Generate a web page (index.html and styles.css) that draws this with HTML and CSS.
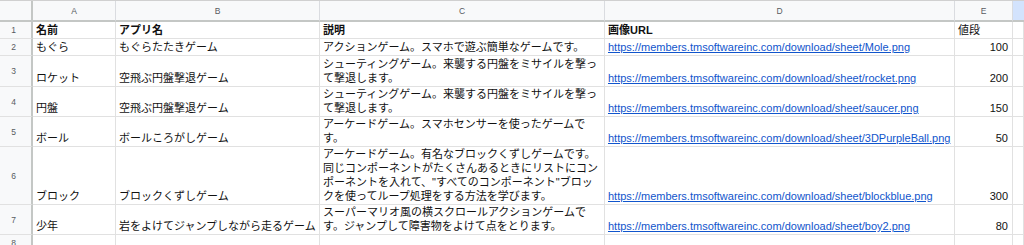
FILE: index.html
```html
<!DOCTYPE html>
<html lang="ja">
<head>
<meta charset="utf-8">
<link rel="stylesheet" href="styles.css">
</head>
<body>
<div class="sheet">
  <div class="corner"></div>
  <div class="colhead">A</div>
  <div class="colhead">B</div>
  <div class="colhead">C</div>
  <div class="colhead">D</div>
  <div class="colhead">E</div>
  <div class="colhead sel"></div>

  <div class="rowhead">1</div>
  <div class="cell b">名前</div>
  <div class="cell b">アプリ名</div>
  <div class="cell b">説明</div>
  <div class="cell b">画像URL</div>
  <div class="cell">値段</div>
  <div class="cell"></div>

  <div class="rowhead">2</div>
  <div class="cell">もぐら</div>
  <div class="cell">もぐらたたきゲーム</div>
  <div class="cell">アクションゲーム。スマホで遊ぶ簡単なゲームです。</div>
  <div class="cell"><a class="link">https://members.tmsoftwareinc.com/download/sheet/Mole.png</a></div>
  <div class="cell num">100</div>
  <div class="cell"></div>

  <div class="rowhead">3</div>
  <div class="cell">ロケット</div>
  <div class="cell">空飛ぶ円盤撃退ゲーム</div>
  <div class="cell">シューティングゲーム。来襲する円盤をミサイルを撃っ<br>て撃退します。</div>
  <div class="cell"><a class="link">https://members.tmsoftwareinc.com/download/sheet/rocket.png</a></div>
  <div class="cell num">200</div>
  <div class="cell"></div>

  <div class="rowhead">4</div>
  <div class="cell">円盤</div>
  <div class="cell">空飛ぶ円盤撃退ゲーム</div>
  <div class="cell">シューティングゲーム。来襲する円盤をミサイルを撃っ<br>て撃退します。</div>
  <div class="cell"><a class="link">https://members.tmsoftwareinc.com/download/sheet/saucer.png</a></div>
  <div class="cell num">150</div>
  <div class="cell"></div>

  <div class="rowhead">5</div>
  <div class="cell">ボール</div>
  <div class="cell">ボールころがしゲーム</div>
  <div class="cell">アーケードゲーム。スマホセンサーを使ったゲームで<br>す。</div>
  <div class="cell"><a class="link">https://members.tmsoftwareinc.com/download/sheet/3DPurpleBall.png</a></div>
  <div class="cell num">50</div>
  <div class="cell"></div>

  <div class="rowhead">6</div>
  <div class="cell">ブロック</div>
  <div class="cell">ブロックくずしゲーム</div>
  <div class="cell">アーケードゲーム。有名なブロックくずしゲームです。<br>同じコンポーネントがたくさんあるときにリストにコン<br>ポーネントを入れて、"すべてのコンポーネント"ブロッ<br>クを使ってループ処理をする方法を学びます。</div>
  <div class="cell"><a class="link">https://members.tmsoftwareinc.com/download/sheet/blockblue.png</a></div>
  <div class="cell num">300</div>
  <div class="cell"></div>

  <div class="rowhead">7</div>
  <div class="cell">少年</div>
  <div class="cell">岩をよけてジャンプしながら走るゲーム</div>
  <div class="cell">スーパーマリオ風の横スクロールアクションゲームで<br>す。ジャンプして障害物をよけて点をとります。</div>
  <div class="cell"><a class="link">https://members.tmsoftwareinc.com/download/sheet/boy2.png</a></div>
  <div class="cell num">80</div>
  <div class="cell"></div>

  <div class="rowhead">8</div>
  <div class="cell"></div>
  <div class="cell"></div>
  <div class="cell"></div>
  <div class="cell"></div>
  <div class="cell"></div>
  <div class="cell"></div>
</div>
</body>
</html>
```

FILE: styles.css
```css
html, body {
  margin: 0;
  padding: 0;
  background: #ffffff;
  overflow: hidden;
}

.sheet {
  display: grid;
  grid-template-columns: 33px 83px 204px 285px 350px 58px 1fr;
  grid-template-rows: 21px 17px 17px 31px 30px 30px 58px 30px 17px;
  font-family: "Liberation Sans", "Noto Sans CJK JP", sans-serif;
  font-size: 11px;
  color: #111111;
  border-top: 1px solid #d0d0d0;
}

.corner {
  background: #f8f9fa;
  border-right: 2px solid #c4c7c5;
  border-bottom: 2px solid #c4c7c5;
}

.colhead {
  background: #f8f9fa;
  border-right: 1px solid #dadce0;
  border-bottom: 2px solid #c4c7c5;
  display: flex;
  align-items: center;
  justify-content: center;
  font-size: 8.5px;
  color: #575b5f;
}

.colhead.sel {
  background: #d3e3fd;
  border-right: none;
}

.rowhead {
  background: #f8f9fa;
  border-right: 2px solid #c4c7c5;
  border-bottom: 1px solid #e1e1e1;
  display: flex;
  align-items: center;
  justify-content: center;
  padding-right: 4px;
  font-size: 8.5px;
  color: #575b5f;
}

.cell {
  border-right: 1px solid #e1e1e1;
  border-bottom: 1px solid #e1e1e1;
  display: flex;
  flex-direction: column;
  justify-content: flex-end;
  padding: 0 3px 1px 3px;
  line-height: 14px;
  white-space: nowrap;
  overflow: hidden;
}

.cell.b {
  font-weight: bold;
}

.cell.num {
  align-items: flex-end;
  padding-right: 4px;
}

.link {
  color: #1155cc;
  text-decoration: underline;
}
```
